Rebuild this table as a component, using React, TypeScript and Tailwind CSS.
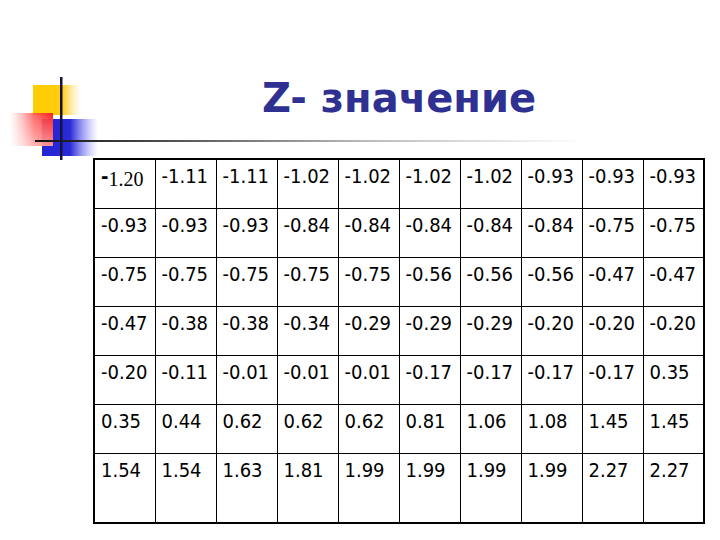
import React from 'react';

const rows: string[][] = [
  ['-1.20', '-1.11', '-1.11', '-1.02', '-1.02', '-1.02', '-1.02', '-0.93', '-0.93', '-0.93'],
  ['-0.93', '-0.93', '-0.93', '-0.84', '-0.84', '-0.84', '-0.84', '-0.84', '-0.75', '-0.75'],
  ['-0.75', '-0.75', '-0.75', '-0.75', '-0.75', '-0.56', '-0.56', '-0.56', '-0.47', '-0.47'],
  ['-0.47', '-0.38', '-0.38', '-0.34', '-0.29', '-0.29', '-0.29', '-0.20', '-0.20', '-0.20'],
  ['-0.20', '-0.11', '-0.01', '-0.01', '-0.01', '-0.17', '-0.17', '-0.17', '-0.17', '0.35'],
  ['0.35', '0.44', '0.62', '0.62', '0.62', '0.81', '1.06', '1.08', '1.45', '1.45'],
  ['1.54', '1.54', '1.63', '1.81', '1.99', '1.99', '1.99', '1.99', '2.27', '2.27'],
];

function Logo() {
  return (
    <svg
      className="absolute left-0 top-[70px]"
      width="600"
      height="95"
      viewBox="0 0 600 95"
    >
      <defs>
        <linearGradient id="yel" x1="0" x2="1" y1="0" y2="0">
          <stop offset="0" stopColor="#ffcc00" />
          <stop offset="0.6" stopColor="#ffcc10" />
          <stop offset="1" stopColor="#ffe080" stopOpacity="0" />
        </linearGradient>
        <linearGradient id="blu" x1="0" x2="1" y1="0" y2="0">
          <stop offset="0" stopColor="#2424d8" />
          <stop offset="0.5" stopColor="#2a2ad6" />
          <stop offset="1" stopColor="#8080ff" stopOpacity="0" />
        </linearGradient>
        <linearGradient id="red" x1="0" x2="1" y1="0" y2="0">
          <stop offset="0" stopColor="#ff8080" stopOpacity="0" />
          <stop offset="0.55" stopColor="#ff4848" stopOpacity="0.8" />
          <stop offset="1" stopColor="#ff2020" />
        </linearGradient>
        <linearGradient id="redv" x1="0" x2="0" y1="0" y2="1">
          <stop offset="0" stopColor="#fff" stopOpacity="0" />
          <stop offset="1" stopColor="#fff" stopOpacity="0.5" />
        </linearGradient>
        <linearGradient id="hline" x1="0" x2="1" y1="0" y2="0">
          <stop offset="0" stopColor="#111" />
          <stop offset="0.2" stopColor="#444" />
          <stop offset="0.6" stopColor="#bbb" />
          <stop offset="1" stopColor="#fff" />
        </linearGradient>
      </defs>
      <rect x="33" y="15" width="48" height="30" fill="url(#yel)" />
      <rect x="42" y="49" width="56" height="37" fill="url(#blu)" />
      <rect x="10" y="43" width="43" height="33" fill="url(#red)" />
      <rect x="10" y="43" width="43" height="33" fill="url(#redv)" />
      <rect x="35" y="70" width="550" height="2" fill="url(#hline)" />
      <rect x="60" y="7" width="2.5" height="83" fill="#14143a" />
    </svg>
  );
}

export default function App() {
  return (
    <div className="relative w-[720px] h-[540px] bg-white overflow-hidden">
      <header className="relative h-[158px]">
        <Logo />
        <h1 className="relative pt-[78px] pl-[262px] text-[40px] leading-none font-bold text-[#2e3092] font-['DejaVu_Sans','Verdana',sans-serif]">
          Z- значение
        </h1>
      </header>

      <table className="ml-[93px] w-[612px] table-fixed border-collapse border-2 border-black font-['DejaVu_Sans_Condensed','Liberation_Sans',sans-serif] text-[20px] leading-[22px] text-black">
        <tbody>
          {rows.map((row, i) => (
            <tr key={i} className={i === rows.length - 1 ? 'h-[70px]' : 'h-[49px]'}>
              {row.map((v, j) => (
                <td key={j} className="border border-black align-top pt-[5px] pl-[6px] whitespace-nowrap">
                  {i === 0 && j === 0 ? (
                    <span>
                      <span className="font-bold">-</span>
                      <span className="font-['Liberation_Serif',serif] text-[20px] align-[-3px]">1.20</span>
                    </span>
                  ) : (
                    v
                  )}
                </td>
              ))}
            </tr>
          ))}
        </tbody>
      </table>
    </div>
  );
}
